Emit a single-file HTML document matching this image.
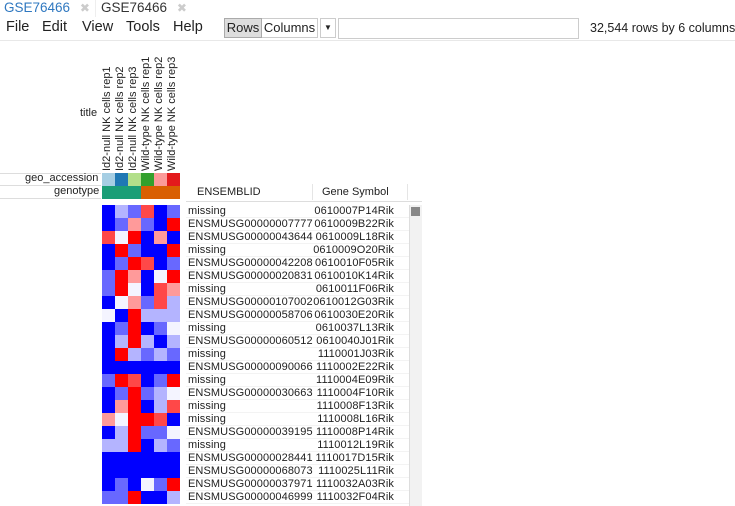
<!DOCTYPE html><html><head><style>
body{margin:0;width:735px;height:506px;overflow:hidden;background:#fff;font-family:"Liberation Sans",sans-serif;position:relative;color:#222}
.a{position:absolute;white-space:nowrap}
.tab{font-size:13.5px;top:0}
.menu{font-size:14.5px;top:19px}
.cell{position:absolute;width:13px;height:13px}
.row{position:absolute;left:186px;width:223px;height:13px;border-bottom:1px solid #f3f3f3;box-sizing:border-box;font-size:11px;line-height:13px}
.row .e{position:absolute;left:2px;letter-spacing:0.1px}.row .g{position:absolute;right:15px;letter-spacing:0.1px}
.lab{position:absolute;font-size:11px;transform:rotate(-90deg);transform-origin:left top;white-space:nowrap;color:#222}
</style></head><body>
<div class="a tab" style="left:4px;color:#2f78c0">GSE76466 <span style="color:#ccc;margin-left:6px;font-size:12px">✖</span></div>
<div class="a" style="left:95px;top:0;width:92px;height:17px;background:#fff;border-left:1px solid #eee"></div>
<div class="a tab" style="left:101px;color:#333">GSE76466 <span style="color:#ccc;margin-left:6px;font-size:12px">✖</span></div>
<div class="a menu" style="left:6px">File</div>
<div class="a menu" style="left:42px">Edit</div>
<div class="a menu" style="left:82px">View</div>
<div class="a menu" style="left:126px">Tools</div>
<div class="a menu" style="left:173px">Help</div>
<div class="a" style="left:224px;top:18px;width:38px;height:20px;background:#ddd;border:1px solid #aaa;box-sizing:border-box;font-size:13px;line-height:18px;text-align:center">Rows</div>
<div class="a" style="left:262px;top:18px;width:56px;height:20px;background:#fff;border:1px solid #ccc;border-left:none;box-sizing:border-box;font-size:13px;line-height:18px;text-align:center">Columns</div>
<div class="a" style="left:320px;top:18px;width:16px;height:20px;border:1px solid #ccc;box-sizing:border-box;font-size:8px;line-height:18px;text-align:center">▼</div>
<div class="a" style="left:338px;top:18px;width:241px;height:21px;border:1px solid #ccc;box-sizing:border-box"></div>
<div class="a" style="left:590px;top:21px;font-size:12.5px">32,544 rows by 6 columns</div>
<div class="a" style="left:0;top:40px;width:735px;height:1px;background:#e8e8e8"></div>

<div class="a" style="left:80px;top:107px;font-size:11px">title</div>
<div class="lab" style="left:101px;top:171px">Id2-null NK cells rep1</div>
<div class="lab" style="left:114px;top:171px">Id2-null NK cells rep2</div>
<div class="lab" style="left:127px;top:171px">Id2-null NK cells rep3</div>
<div class="lab" style="left:140px;top:171px">Wild-type NK cells rep1</div>
<div class="lab" style="left:153px;top:171px">Wild-type NK cells rep2</div>
<div class="lab" style="left:166px;top:171px">Wild-type NK cells rep3</div>
<div class="a" style="left:0;top:173px;width:101px;height:13px;border-top:1px solid #ddd;border-bottom:1px solid #ddd;box-sizing:border-box"></div>
<div class="a" style="left:0;top:186px;width:101px;height:13px;border-bottom:1px solid #ddd;box-sizing:border-box"></div>
<div class="a" style="left:25px;top:172px;font-size:11px">geo_accession</div>
<div class="a" style="left:54px;top:185px;font-size:11px">genotype</div>
<div class="cell" style="left:102px;top:173px;background:#a6cee3"></div>
<div class="cell" style="left:115px;top:173px;background:#1f78b4"></div>
<div class="cell" style="left:128px;top:173px;background:#b2df8a"></div>
<div class="cell" style="left:141px;top:173px;background:#33a02c"></div>
<div class="cell" style="left:154px;top:173px;background:#fb9a99"></div>
<div class="cell" style="left:167px;top:173px;background:#e31a1c"></div>
<div class="a" style="left:102px;top:186px;width:39px;height:13px;background:#1b9e77"></div>
<div class="a" style="left:141px;top:186px;width:39px;height:13px;background:#d95f02"></div>

<div class="a" style="left:186px;top:184px;width:236px;height:17px;border-bottom:1px solid #ddd"></div>
<div class="a" style="left:197px;top:186px;font-size:11px">ENSEMBLID</div>
<div class="a" style="left:312px;top:184px;width:1px;height:16px;background:#e5e5e5"></div>
<div class="a" style="left:322px;top:186px;font-size:11px">Gene Symbol</div>
<div class="a" style="left:407px;top:184px;width:1px;height:16px;background:#e5e5e5"></div>
<div class="a" style="left:409px;top:205px;width:12px;height:301px;background:#f2f2f2;border-left:1px solid #ddd"></div>
<div class="a" style="left:411px;top:207px;width:9px;height:9px;background:#888"></div>
<div id="hm"></div>
<script>
var C={B:"#0000ff",b:"#6868ff",l:"#b4b4ff",w:"#f4f4ff",p:"#ff9a9a",r:"#ff0000",R:"#ff4848"};
var M=["BlbRBb","BbpbBr","RwrBpB","BrbBBr","BbrRBb","brpBwr","brwBRp","BwpbRl","wBrlll","BbrBbw","BlrlBl","Brlblb","BBBBBB","brRBbr","Bbrblw","BprBlR","pwrrRB","Blrbbw","llrBlb","BBBBBB","BBBBBB","BbBwbr","bbrBBl"];
var D=[["missing","0610007P14Rik"],["ENSMUSG00000007777","0610009B22Rik"],["ENSMUSG00000043644","0610009L18Rik"],["missing","0610009O20Rik"],["ENSMUSG00000042208","0610010F05Rik"],["ENSMUSG00000020831","0610010K14Rik"],["missing","0610011F06Rik"],["ENSMUSG00000107002","0610012G03Rik"],["ENSMUSG00000058706","0610030E20Rik"],["missing","0610037L13Rik"],["ENSMUSG00000060512","0610040J01Rik"],["missing","1110001J03Rik"],["ENSMUSG00000090066","1110002E22Rik"],["missing","1110004E09Rik"],["ENSMUSG00000030663","1110004F10Rik"],["missing","1110008F13Rik"],["missing","1110008L16Rik"],["ENSMUSG00000039195","1110008P14Rik"],["missing","1110012L19Rik"],["ENSMUSG00000028441","1110017D15Rik"],["ENSMUSG00000068073","1110025L11Rik"],["ENSMUSG00000037971","1110032A03Rik"],["ENSMUSG00000046999","1110032F04Rik"]];
var h="";
for(var i=0;i<23;i++){var y=205+i*13;
for(var j=0;j<6;j++)h+='<div class="cell" style="left:'+(102+j*13)+'px;top:'+y+'px;background:'+C[M[i][j]]+'"></div>';
h+='<div class="row" style="top:'+y+'px"><span class="e">'+D[i][0]+'</span><span class="g">'+D[i][1]+'</span></div>';}
document.getElementById("hm").innerHTML=h;
</script>
</body></html>
